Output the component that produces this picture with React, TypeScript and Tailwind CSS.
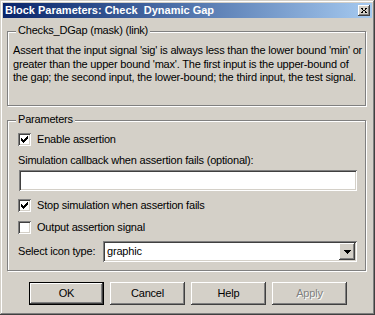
import type { ReactNode } from "react";

const raised =
  "shadow-[inset_-1px_-1px_0_#404040,inset_1px_1px_0_#fff,inset_-2px_-2px_0_#808080,inset_2px_2px_0_#d4d0c8]";
const sunken =
  "shadow-[inset_1px_1px_0_#808080,inset_-1px_-1px_0_#fff,inset_2px_2px_0_#404040,inset_-2px_-2px_0_#d4d0c8]";
const etched = "border border-[#808080] shadow-[inset_1px_1px_0_#fff,1px_1px_0_#fff]";

function CheckBox({ checked }: { checked?: boolean }) {
  return (
    <span className={`flex h-[13px] w-[13px] shrink-0 bg-white ${sunken}`}>
      {checked && (
        <svg width="7" height="7" viewBox="0 0 7 7" className="m-[3px]" shapeRendering="crispEdges">
          <path d="M0 2h1v3H0zM1 3h1v3H1zM2 4h1v3H2zM3 3h1v3H3zM4 2h1v3H4zM5 1h1v3H5zM6 0h1v3H6z" fill="#000" />
        </svg>
      )}
    </span>
  );
}

function CheckRow({ checked, label, className = "" }: { checked?: boolean; label: string; className?: string }) {
  return (
    <label className={`flex h-[13px] items-center gap-[6px] leading-[13px] ${className}`}>
      <CheckBox checked={checked} />
      <span>{label}</span>
    </label>
  );
}

function Group({ title, className, children }: { title: string; className: string; children: ReactNode }) {
  return (
    <div className={`relative ml-[4px] w-[359px] ${etched} ${className}`}>
      <span className="absolute left-[8px] top-[-8px] bg-[#d4d0c8] px-[2px] leading-[13px]">{title}</span>
      {children}
    </div>
  );
}

function Button({ children, isDefault, disabled }: { children: ReactNode; isDefault?: boolean; disabled?: boolean }) {
  return (
    <button
      type="button"
      className={`flex h-[23px] w-[75px] items-center justify-center bg-[#d4d0c8] ${raised} ${
        isDefault ? "border border-black" : ""
      } ${disabled ? "text-[#808080] [text-shadow:1px_1px_0_#fff]" : "text-black"}`}
    >
      {children}
    </button>
  );
}

export default function App() {
  return (
    <div className="flex h-[315px] w-[375px] flex-col bg-[#d4d0c8] p-[3px] font-['Liberation_Sans',Arial,sans-serif] text-[11px] tracking-[-0.2px] text-black shadow-[inset_-1px_-1px_0_#404040,inset_1px_1px_0_#d4d0c8,inset_-2px_-2px_0_#808080,inset_2px_2px_0_#fff]">
      <div className="flex h-[15px] items-center justify-between bg-linear-to-r from-[#0a246a] to-[#a6caf0] px-[2px]">
        <span className="whitespace-pre font-bold leading-none tracking-normal text-white">Block Parameters: Check  Dynamic Gap</span>
        <span className={`flex h-[11px] w-[12px] items-center justify-center bg-[#d4d0c8] ${raised}`}>
          <svg width="6" height="5" viewBox="0 0 6 5" shapeRendering="crispEdges">
            <path d="M0 0h2v1H0zM4 0h2v1H4zM1 1h1v1H1zM4 1h1v1H4zM2 2h2v1H2zM1 3h1v1H1zM4 3h1v1H4zM0 4h2v1H0zM4 4h2v1H4z" fill="#000" />
          </svg>
        </span>
      </div>

      <Group title="Checks_DGap (mask) (link)" className="mt-[13px] h-[75px] pl-[5px] pt-[12px]">
        <div className="whitespace-nowrap leading-[13.5px]">
          <div>Assert that the input signal 'sig' is always less than the lower bound 'min' or</div>
          <div>greater than the upper bound 'max'.  The first input is the upper-bound of</div>
          <div>the gap; the second input, the lower-bound; the third input, the test signal.</div>
        </div>
      </Group>

      <Group title="Parameters" className="mt-[14px] flex h-[151px] flex-col pl-[10px] pt-[12px]">
        <CheckRow checked label="Enable assertion" />
        <div className="mt-[8px] leading-[13px]">Simulation callback when assertion fails (optional):</div>
        <div className={`ml-[1px] mt-[3px] h-[21px] w-[338px] bg-white ${sunken}`} />
        <CheckRow checked label="Stop simulation when assertion fails" className="mt-[8px]" />
        <CheckRow label="Output assertion signal" className="mt-[9px]" />
        <div className="mt-[7px] flex h-[21px] items-center">
          <span className="w-[85px]">Select icon type:</span>
          <div className={`flex h-[21px] w-[254px] items-center justify-between bg-white pl-[4px] pr-[2px] ${sunken}`}>
            <span>graphic</span>
            <span className={`flex h-[17px] w-[16px] items-center justify-center bg-[#d4d0c8] ${raised}`}>
              <svg width="7" height="4" viewBox="0 0 7 4" shapeRendering="crispEdges">
                <path d="M0 0h7v1H0zM1 1h5v1H1zM2 2h3v1H2zM3 3h1v1H3z" fill="#000" />
              </svg>
            </span>
          </div>
        </div>
      </Group>

      <div className="ml-[26px] mt-[11px] flex gap-[6px]">
        <Button isDefault>OK</Button>
        <Button>Cancel</Button>
        <Button>Help</Button>
        <Button disabled>Apply</Button>
      </div>
    </div>
  );
}
